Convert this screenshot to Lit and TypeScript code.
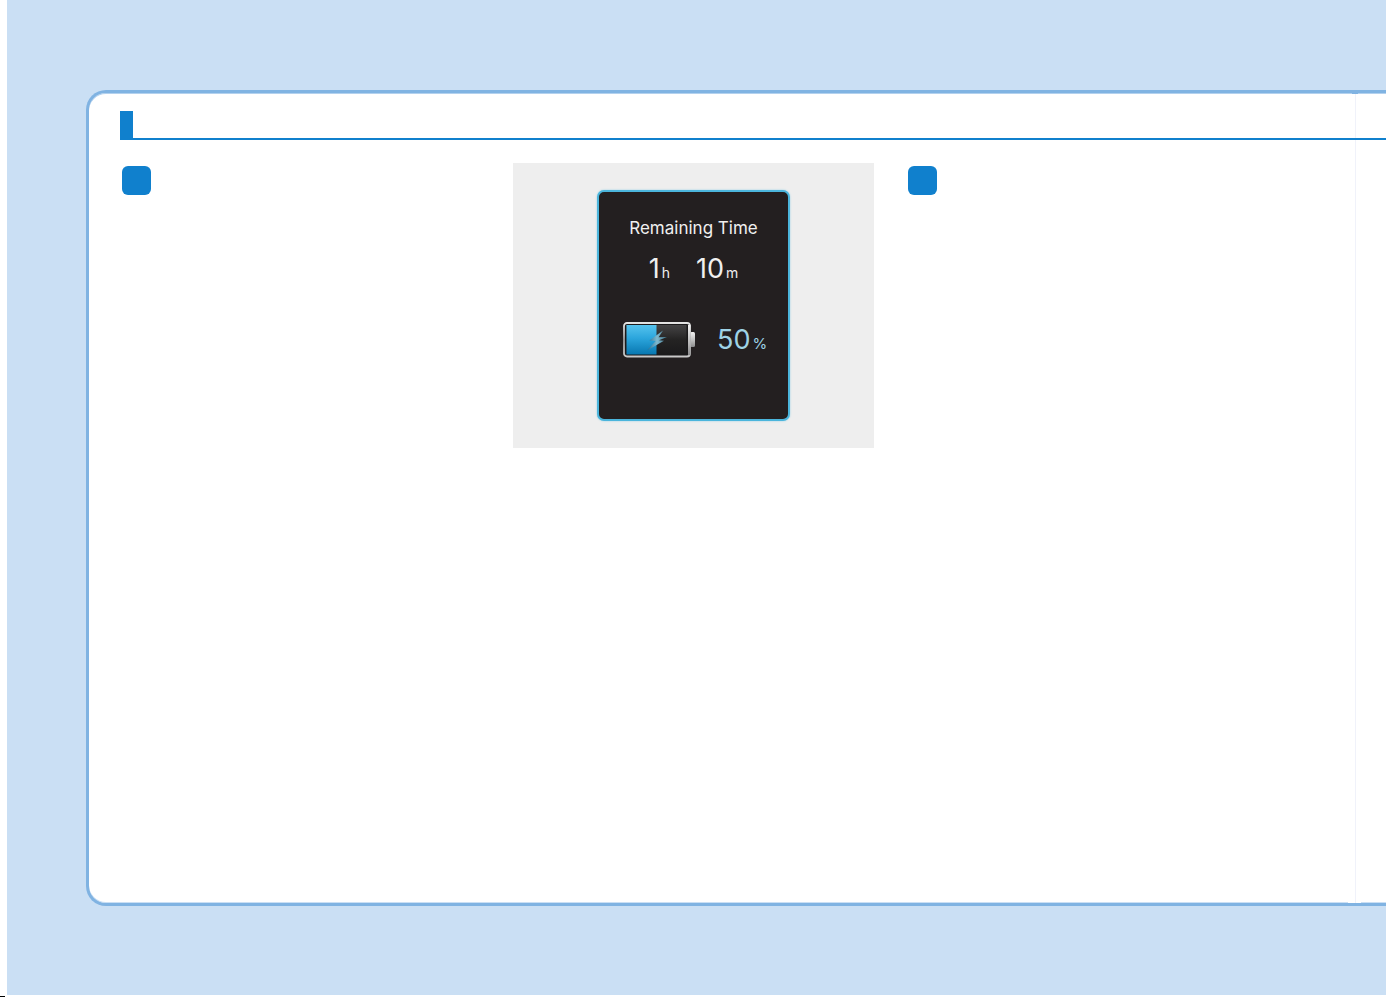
import { LitElement, html, css } from "lit";
import { customElement, property } from "lit/decorators.js";

@customElement("charge-battery")
class ChargeBattery extends LitElement {
  @property({ type: Number }) level = 50;

  static styles = css`
    :host {
      display: block;
      width: 73px;
      height: 36px;
    }
    svg {
      display: block;
    }
  `;

  render() {
    return html`
      <svg width="73" height="36" viewBox="0 0 73 36" aria-hidden="true">
        <defs>
          <linearGradient id="frame" x1="0" y1="0" x2="0" y2="1">
            <stop offset="0" stop-color="#e4e4e4" />
            <stop offset="0.5" stop-color="#a0a0a1" />
            <stop offset="1" stop-color="#c8c8c8" />
          </linearGradient>
          <linearGradient id="side" x1="0" y1="0" x2="0" y2="1">
            <stop offset="0" stop-color="#f2f2f2" />
            <stop offset="0.6" stop-color="#b9b9b9" />
            <stop offset="1" stop-color="#8b8b8c" />
          </linearGradient>
          <linearGradient id="charge" x1="0" y1="0" x2="0" y2="1">
            <stop offset="0" stop-color="#55c3ee" />
            <stop offset="0.45" stop-color="#2ba5dc" />
            <stop offset="1" stop-color="#0877b0" />
          </linearGradient>
          <linearGradient id="empty" x1="0" y1="0" x2="0" y2="1">
            <stop offset="0" stop-color="#454445" />
            <stop offset="0.5" stop-color="#242323" />
            <stop offset="1" stop-color="#1b1a1b" />
          </linearGradient>
          <linearGradient id="bolt" x1="0" y1="0" x2="1" y2="0">
            <stop offset="0" stop-color="#1f6a90" />
            <stop offset="0.5" stop-color="#7fb9cf" />
            <stop offset="1" stop-color="#3f7289" />
          </linearGradient>
        </defs>
        <rect x="67" y="10" width="5" height="15" rx="1.5" fill="url(#side)" />
        <rect x="1" y="1" width="66" height="33.5" rx="3" fill="#1b1a1b" stroke="url(#frame)" stroke-width="1.8" />
        <rect x="65" y="3" width="2.5" height="30" fill="url(#side)" />
        <rect x="3.5" y="3" width="60" height="29.5" fill="url(#empty)" />
        <rect x="3.5" y="3" width=${(this.level / 100) * 60} height="29.5" fill="url(#charge)" />
        <path d="M40 8.5 L26.3 18.6 L32.6 18.9 L24 28.5 L41 18.8 L36 18.2 L44 15 L35.6 15.3 Z" fill="url(#bolt)" />
      </svg>
    `;
  }
}

@customElement("charge-display")
class ChargeDisplay extends LitElement {
  static styles = css`
    :host {
      display: block;
      box-sizing: border-box;
      width: 193px;
      height: 231px;
      padding-top: 24px;
      border: 2px solid #4bb5dc;
      border-radius: 7px;
      background: #231f20;
      box-shadow: 0 0 2px #8fcfe6;
      color: #f0f0f0;
      font-family: Inter, "Liberation Sans", sans-serif;
    }
    .title {
      margin: 0;
      text-align: center;
      font-size: 17px;
      line-height: 24px;
      font-weight: 400;
    }
    .time {
      display: flex;
      justify-content: center;
      gap: 26px;
      margin: 13px 0 0;
      font-size: 27px;
      line-height: 32px;
    }
    .unit {
      margin-left: 2px;
      font-size: 14px;
      line-height: 16px;
    }
    .status {
      display: flex;
      align-items: flex-start;
      gap: 21px;
      margin-top: 37px;
      padding-left: 24px;
    }
    .level {
      font-size: 27px;
      line-height: 36px;
      color: #9fd3e6;
      white-space: nowrap;
    }
    .percent {
      margin-left: 2px;
      font-size: 15px;
    }
  `;

  render() {
    return html`
      <h2 class="title">Remaining Time</h2>
      <p class="time">
        <span>1<span class="unit">h</span></span>
        <span>10<span class="unit">m</span></span>
      </p>
      <div class="status">
        <charge-battery .level=${50}></charge-battery>
        <span class="level">50<span class="percent">%</span></span>
      </div>
    `;
  }
}

@customElement("app-root")
class AppRoot extends LitElement {
  static styles = css`
    :host {
      display: block;
      box-sizing: border-box;
      height: 100vh;
      padding: 0 2px 2px 7px;
      overflow: hidden;
      background: linear-gradient(#000, #000) 0 100% / 5px 1px no-repeat #fff;
    }
    .page {
      box-sizing: border-box;
      height: 100%;
      padding: 90px 0 89px 79px;
      background: #cadff4;
    }
    .panel {
      position: relative;
      box-sizing: border-box;
      height: 100%;
      padding: 18px 0 0 31px;
      border: solid #80b3e2;
      border-width: 3px 0 3px 3px;
      border-radius: 20px 0 0 20px;
      background: #fff;
      box-shadow: inset 0 1px #b3d1ee, inset 0 -1px #cadff4;
    }
    .seam {
      position: absolute;
      top: 0;
      bottom: 0;
      right: 25px;
      width: 13px;
      background:
        linear-gradient(#80b3e2, #80b3e2) 4px 0 / 6px 1px no-repeat,
        linear-gradient(#f0f2fa, #f0f2fa) 7px 0 / 1px 100% no-repeat,
        linear-gradient(#fff, #fff) 0 100% / 13px 1px no-repeat;
    }
    .heading {
      position: relative;
      z-index: 1;
      box-sizing: border-box;
      height: 29px;
      border-left: 13px solid #1080cd;
      border-bottom: 2px solid #1080cd;
    }
    .columns {
      display: grid;
      grid-template-columns: repeat(3, 1fr);
      gap: 32px;
      margin-top: 23px;
      padding-right: 119px;
    }
    .marker {
      width: 29px;
      height: 29px;
      margin: 3px 2px;
      border-radius: 6px;
      background: #1080cd;
    }
    .figure {
      display: flex;
      justify-content: center;
      box-sizing: border-box;
      height: 285px;
      margin: 0;
      padding-top: 27px;
      background: #eeeeee;
    }
  `;

  render() {
    return html`
      <main class="page">
        <section class="panel">
          <div class="heading"></div>
          <div class="columns">
            <div><div class="marker"></div></div>
            <figure class="figure"><charge-display></charge-display></figure>
            <div><div class="marker"></div></div>
          </div>
          <div class="seam"></div>
        </section>
      </main>
    `;
  }
}
